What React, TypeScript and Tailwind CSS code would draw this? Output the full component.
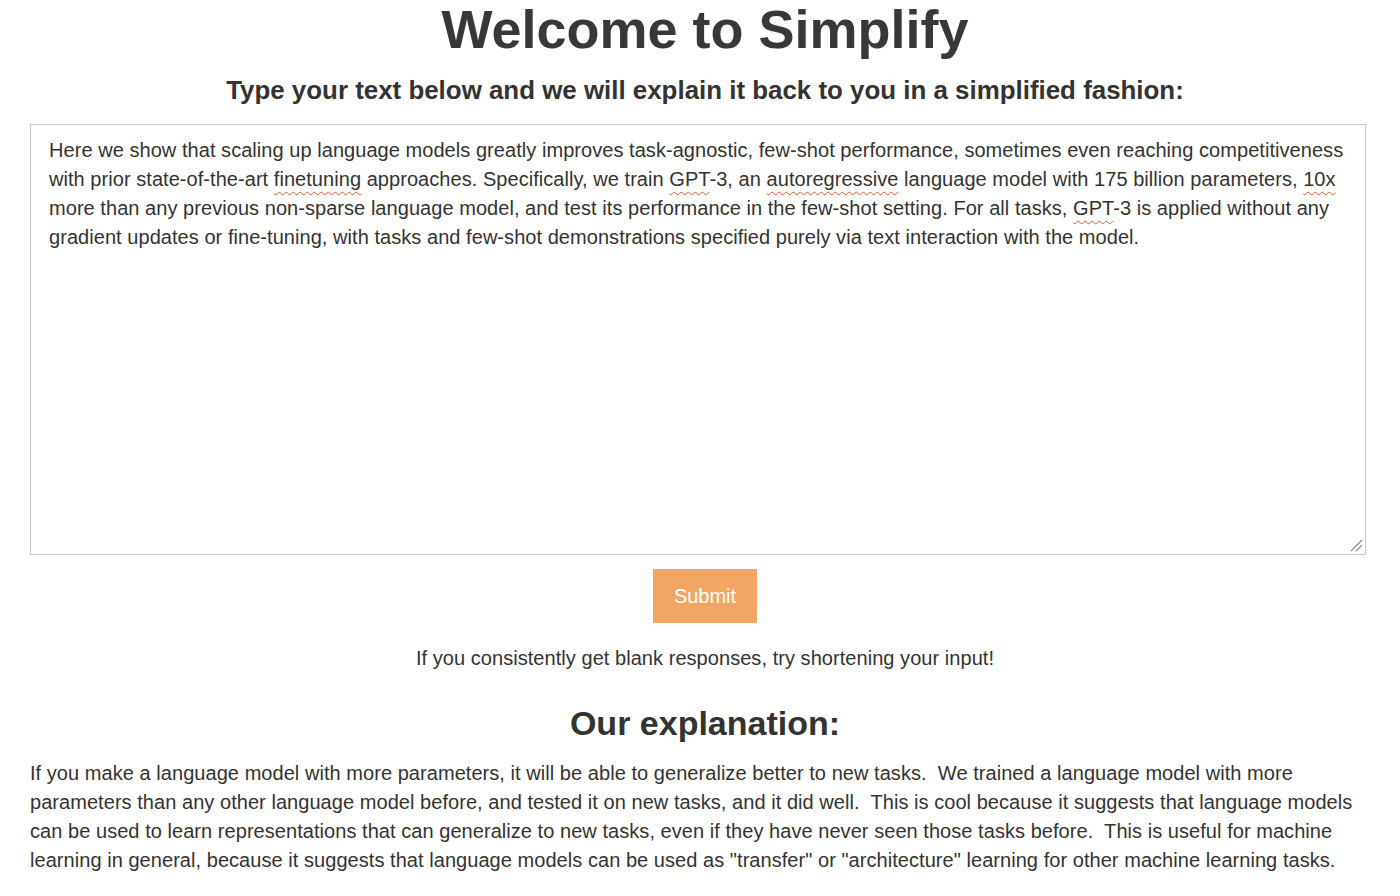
const Typo = ({ children }: { children: React.ReactNode }) => (
  <span className="underline decoration-wavy decoration-[#d9602f] decoration-1 underline-offset-[5px]">{children}</span>
);

export default function App() {
  return (
    <div className="w-screen min-h-screen bg-white text-[#333] font-['Liberation_Sans',Arial,sans-serif]">
      <div className="ml-[30px] w-[1350px] flex flex-col items-center">
        <h1 className="-mt-[2px] text-[54px] font-bold leading-[62px] text-[#383838]">Welcome to Simplify</h1>
        <h2 className="mt-[15px] text-[25.9px] font-bold leading-[30px] text-[#333]">
          Type your text below and we will explain it back to you in a simplified fashion:
        </h2>

        <div className="self-start relative mt-[19px] w-[1336px] h-[431px] border border-[#c8c8c8] pl-[18px] pr-[14px] pt-[11px] text-[20px] tracking-[0.05px] leading-[29px] text-[#333]">
          Here we show that scaling up language models greatly improves task-agnostic, few-shot performance, sometimes even reaching competitiveness
          with prior state-of-the-art <Typo>finetuning</Typo> approaches. Specifically, we train <Typo>GPT</Typo>-3, an{" "}
          <Typo>autoregressive</Typo> language model with 175 billion parameters, <Typo>10x</Typo> more than any previous
          non-sparse language model, and test its performance in the few-shot setting. For all tasks, <Typo>GPT</Typo>-3 is
          applied without any gradient updates or fine-tuning, with tasks and few-shot demonstrations specified purely via text
          interaction with the model.
          <svg className="absolute right-[2px] bottom-[2px]" width="14" height="14" viewBox="0 0 14 14">
            <path d="M13 2 L2 13 M13 7 L7 13" stroke="#8a8a8a" strokeWidth="1.2" />
          </svg>
        </div>

        <button className="mt-[14px] w-[104px] h-[54px] bg-[#f2a663] text-white text-[20px]">Submit</button>

        <p className="mt-[21px] text-[20px] tracking-[0.05px] leading-[29px]">If you consistently get blank responses, try shortening your input!</p>

        <h3 className="mt-[30px] text-[34px] font-bold leading-[40px]">Our explanation:</h3>

        <p className="self-start mt-[16px] w-[1350px] text-[20px] tracking-[0.05px] leading-[29px] whitespace-pre-wrap">
          {"If you make a language model with more parameters, it will be able to generalize better to new tasks.  We trained a language model with more parameters than any other language model before, and tested it on new tasks, and it did well.  This is cool because it suggests that language models can be used to learn representations that can generalize to new tasks, even if they have never seen those tasks before.  This is useful for machine learning in general, because it suggests that language models can be used as \"transfer\" or \"architecture\" learning for other machine learning tasks."}
        </p>
      </div>
    </div>
  );
}
